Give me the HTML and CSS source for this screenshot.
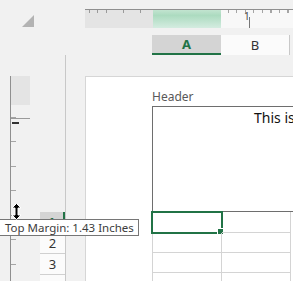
FILE: index.html
```html
<!DOCTYPE html>
<html lang="en">
<head>
    <meta charset="UTF-8">
    <meta name="viewport" content="width=device-width, initial-scale=1.0">
    <title>Page Layout</title>
    <link rel="stylesheet" href="styles.css">
</head>
<body>
    <div class="sheet">
        <!-- corner button and top ruler -->
        <div class="top">
            <div class="corner">
                <svg width="12" height="12" viewBox="0 0 12 12"><polygon points="0,12 12,12 12,0" fill="#b3b3b3"/></svg>
            </div>
            <div class="hruler">
                <div class="hr-margin"></div>
                <div class="hr-sel"></div>
                <div class="hr-body"><span class="hr-num">1</span></div>
            </div>
        </div>

        <!-- column letters -->
        <div class="colhead">
            <div class="col col-sel">A</div>
            <div class="col">B</div>
        </div>

        <div class="main">
            <div class="vruler">
                <div class="vr-margin"></div>
                <div class="vr-mark"></div>
                <div class="vr-arrow"></div>
            </div>
            <div class="rowhead">
                <div class="row row-sel">1</div>
                <div class="row">2</div>
                <div class="row">3</div>
                <div class="row">4</div>
            </div>
            <div class="page">
                <div class="hlabel">Header</div>
                <div class="hbox"><p>This is my header</p></div>
                <div class="cells">
                    <div class="cell cell-sel"></div><div class="cell"></div>
                    <div class="cell"></div><div class="cell"></div>
                    <div class="cell"></div><div class="cell"></div>
                    <div class="cell"></div><div class="cell"></div>
                </div>
            </div>
        </div>

        <div class="tip">Top Margin: 1.43 Inches</div>
        <svg class="cursor" width="11" height="17" viewBox="0 0 11 17">
            <path d="M5.5 0.5 L10 5 L7 5 L7 12 L10 12 L5.5 16.5 L1 12 L4 12 L4 5 L1 5 Z" fill="#000" stroke="#fff" stroke-width="1"/>
        </svg>
    </div>
</body>
</html>
```

FILE: styles.css
```css
body {
    margin: 0;
    padding: 0;
    background-color: #f1f1f1;
    font-family: "Noto Sans", "Open Sans", sans-serif;
    overflow: hidden;
}
.sheet {
    position: relative;
    width: 293px;
    height: 281px;
    overflow: hidden;
}

/* top strip */
.top {
    display: flex;
    height: 35px;
}
.corner {
    flex: none;
    width: 85px;
    padding: 15px 0 0 22px;
    box-sizing: border-box;
}
.corner svg {
    display: block;
}
.hruler {
    flex: 1;
    display: flex;
    margin-top: 9px;
    height: 18px;
    border-top: 1px solid #8f8f8f;
}
.hr-margin {
    flex: none;
    width: 68px;
    background-color: #e4e4e4;
    background-image:
        repeating-linear-gradient(to right, transparent 0 4px, #9a9a9a 4px 5px, transparent 5px 8.5px);
    background-size: 100% 3px;
    background-repeat: no-repeat;
}
.hr-sel {
    flex: none;
    width: 68px;
    background: linear-gradient(to bottom, #c2e4d0 0, #acdbc0 30%, #d4ece0 100%);
}
.hr-body {
    flex: 1;
    position: relative;
    background-color: #f8f8f8;
    background-image:
        repeating-linear-gradient(to right, transparent 0 7px, #a5a5a5 7px 8px, transparent 8px 8.5px);
    background-size: 100% 3px;
    background-repeat: no-repeat;
}
.hr-num {
    position: absolute;
    left: 23px;
    top: 1px;
    font-size: 10px;
    line-height: 10px;
    color: #444;
}
.hr-body::after {
    content: "";
    position: absolute;
    left: 28px;
    top: 7px;
    width: 1px;
    height: 11px;
    background-color: #777;
}

/* column letters */
.colhead {
    display: flex;
    height: 20px;
    padding-left: 152px;
}
.col {
    flex: none;
    width: 69px;
    box-sizing: border-box;
    background-color: #fbfbfb;
    border-right: 1px solid #c8c8c8;
    text-align: center;
    font-size: 13px;
    line-height: 20px;
    color: #333;
}
.col-sel {
    background-color: #d4d4d4;
    border-right: none;
    border-bottom: 2px solid #217346;
    color: #217346;
    font-weight: bold;
    line-height: 19px;
}

/* body */
.main {
    display: flex;
}
.vruler {
    flex: none;
    width: 19px;
    margin: 21px 10px 0 10px;
    height: 205px;
    border-left: 1px solid #8f8f8f;
    background-image:
        repeating-linear-gradient(to bottom, transparent 0 16px, #a5a5a5 16px 17px, transparent 17px 24.5px);
    background-size: 5px 100%;
    background-repeat: no-repeat;
}
.vr-margin {
    height: 29px;
    background-color: #e4e4e4;
}
.vr-mark {
    margin-top: 13px;
    height: 1px;
    background-color: #9a9a9a;
}
.vr-arrow {
    margin: 3px 0 0 1px;
    width: 7px;
    height: 2px;
    background-color: #333;
}
.rowhead {
    flex: none;
    width: 25px;
    padding-top: 157px;
    border-right: 1px solid #c8c8c8;
}
.row {
    height: 20px;
    background-color: #fbfbfb;
    border-bottom: 1px solid #d0d0d0;
    text-align: center;
    font-size: 13px;
    line-height: 20px;
    color: #333;
}
.row-sel {
    background-color: #d4d4d4;
    border-right: 2px solid #217346;
    color: #217346;
    font-weight: bold;
}
.page {
    flex: 1;
    min-width: 0;
    margin: 21px 0 0 19px;
    height: 300px;
    background-color: #fff;
    border-top: 1px solid #d6d6d6;
    border-left: 1px solid #d6d6d6;
    padding: 13px 0 0 66px;
}
.hlabel {
    font-size: 12px;
    line-height: 14px;
    color: #595959;
}
.hbox {
    margin-top: 2px;
    height: 104px;
    width: 300px;
    border: 1px solid #6e6e6e;
    border-right: none;
}
.hbox p {
    margin: 0;
    padding: 1px 0 0 101px;
    font-size: 14px;
    line-height: 19px;
    color: #111;
    white-space: nowrap;
}
.cells {
    display: grid;
    grid-template-columns: 69px 69px;
    grid-template-rows: 21px 20px 20px 20px;
    border-left: 1px solid #d4d4d4;
    width: 138px;
}
.cell {
    position: relative;
    border-right: 1px solid #d4d4d4;
    border-bottom: 1px solid #d4d4d4;
}
.cell-sel {
    outline: 2px solid #217346;
    outline-offset: -1px;
    margin-left: -1px;
}
.cell-sel::after {
    content: "";
    position: absolute;
    right: -3px;
    bottom: -3px;
    width: 5px;
    height: 5px;
    background-color: #217346;
    border: 1px solid #fff;
}

/* tooltip and cursor */
.tip {
    position: absolute;
    left: -1px;
    top: 219px;
    padding: 0 4px 0 5px;
    background-color: #fff;
    border: 1px solid #767676;
    font-size: 11.5px;
    line-height: 15px;
    color: #3c3c3c;
    white-space: nowrap;
}
.cursor {
    position: absolute;
    left: 11px;
    top: 203px;
}
```
